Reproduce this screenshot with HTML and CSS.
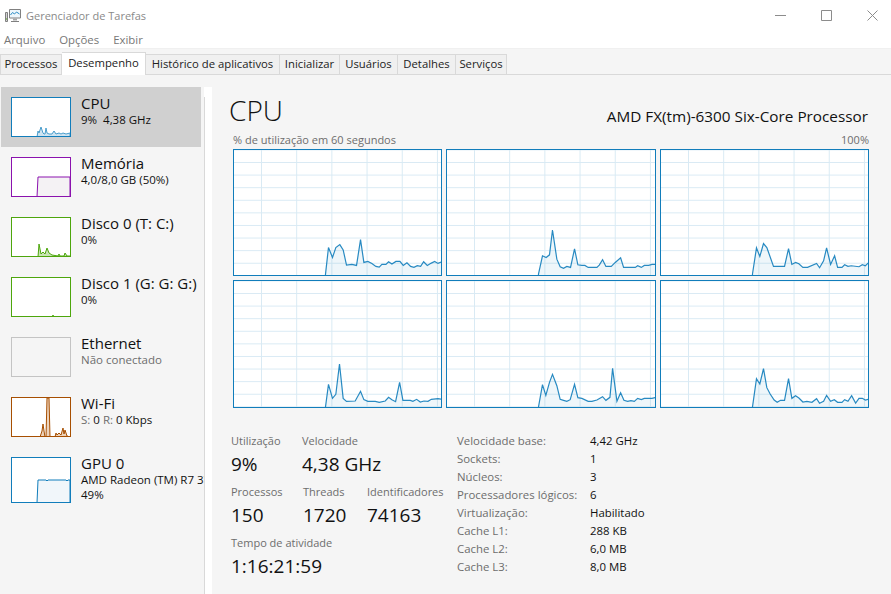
FILE: index.html
```html
<!DOCTYPE html>
<html lang="pt-BR">
<head>
    <meta charset="UTF-8">
    <meta name="viewport" content="width=device-width, initial-scale=1.0">
    <title>Gerenciador de Tarefas</title>
    <link rel="stylesheet" href="styles.css">
</head>
<body>
    <div class="titlebar">
        <svg class="app-icon" viewBox="0 0 16 16" width="16" height="16">
            <path d="M0.500 5.500h2v9h-2z" fill="#d4d4d4" stroke="#7f7f7f"/>
            <path d="M1 12h1" stroke="#4da60c"/>
            <path d="M4.500 2.500h11v8.500h-11z" fill="#eef6fb" stroke="#808080"/>
            <path d="M5.500 8l2-2.500 2 1.500 2-2 3 2" fill="none" stroke="#2a8bc4"/>
            <path d="M8 11.500h4v2h-4z" fill="#a6a6a6"/>
            <path d="M6 14.500h8" stroke="#7f7f7f"/>
        </svg>
        <span class="app-title">Gerenciador de Tarefas</span>
        <div class="window-buttons">
            <svg viewBox="0 0 11 11" width="11" height="11"><path d="M0 5.500h11" stroke="#8c8c8c"/></svg>
            <svg viewBox="0 0 11 11" width="11" height="11"><path d="M0.500 0.500h10v10h-10z" fill="none" stroke="#8c8c8c"/></svg>
            <svg viewBox="0 0 11 11" width="11" height="11"><path d="M0.500 0.500l10 10M10.500 0.500l-10 10" stroke="#8c8c8c"/></svg>
        </div>
    </div>
    <div class="menubar">
        <span>Arquivo</span>
        <span>Opções</span>
        <span>Exibir</span>
    </div>
    <div class="tabs">
        <div class="tab tab-processos">Processos</div>
        <div class="tab tab-active">Desempenho</div>
        <div class="tab tab-historico">Histórico de aplicativos</div>
        <div class="tab tab-inicializar">Inicializar</div>
        <div class="tab tab-usuarios">Usuários</div>
        <div class="tab tab-detalhes">Detalhes</div>
        <div class="tab tab-servicos">Serviços</div>
    </div>
    <div class="main">
        <div class="sidebar">
            <div class="item item-selected">
                <div class="thumb thumb-blue">
                    <svg viewBox="0 0 58 38" preserveAspectRatio="none"><polyline class="fill-blue fill-cpu" points="25,39 26,33 27,35 29,29 31,35 32,36 33,36 34,30 35,35 37,36 40,36 42,33 44,36 47,35 49,36 51,35 54,36 58,35 58,39"/></svg>
                </div>
                <div class="item-text">
                    <div class="item-name">CPU</div>
                    <div class="item-sub">9%&nbsp; 4,38 GHz</div>
                </div>
            </div>
            <div class="item">
                <div class="thumb thumb-purple">
                    <svg viewBox="0 0 58 38" preserveAspectRatio="none"><polyline class="fill-purple" points="25,39 26,19 58,19 58,39"/></svg>
                </div>
                <div class="item-text">
                    <div class="item-name">Memória</div>
                    <div class="item-sub">4,0/8,0 GB (50%)</div>
                </div>
            </div>
            <div class="item">
                <div class="thumb thumb-green">
                    <svg viewBox="0 0 58 38" preserveAspectRatio="none"><polyline class="fill-green" points="26,39 27,26 29,36 31,34 33,36 35,30 37,35 40,37 46,38 47,36 48,38 52,38 53,35 55,38 58,38 58,39"/></svg>
                </div>
                <div class="item-text">
                    <div class="item-name">Disco 0 (T: C:)</div>
                    <div class="item-sub">0%</div>
                </div>
            </div>
            <div class="item">
                <div class="thumb thumb-green">
                    <svg viewBox="0 0 58 38" preserveAspectRatio="none"><polyline class="fill-green" points="40,39 41,37 42,39"/></svg>
                </div>
                <div class="item-text">
                    <div class="item-name">Disco 1 (G: G: G:)</div>
                    <div class="item-sub">0%</div>
                </div>
            </div>
            <div class="item">
                <div class="thumb thumb-gray"></div>
                <div class="item-text">
                    <div class="item-name">Ethernet</div>
                    <div class="item-sub sub-muted">Não conectado</div>
                </div>
            </div>
            <div class="item">
                <div class="thumb thumb-orange">
                    <svg viewBox="0 0 58 38" preserveAspectRatio="none"><polyline class="fill-orange" points="28,39 30,33 31,26 32,33 33,39 34,39 35,0 37,0 38,39 43,39 44,35 45,37 47,35 49,37 51,30 52,36 53,32 55,38 58,39"/></svg>
                </div>
                <div class="item-text">
                    <div class="item-name">Wi-Fi</div>
                    <div class="item-sub"><span class="sub-muted">S:</span> 0 <span class="sub-muted">R:</span> 0 Kbps</div>
                </div>
            </div>
            <div class="item">
                <div class="thumb thumb-blue thumb-tall">
                    <svg viewBox="0 0 58 44" preserveAspectRatio="none"><polyline class="fill-blue" points="25,45 26,22 34,22 35,23 36,22 54,22 55,23 56,22 58,22 58,45"/></svg>
                </div>
                <div class="item-text">
                    <div class="item-name">GPU 0</div>
                    <div class="item-sub">AMD Radeon (TM) R7 370 Series</div>
                    <div class="item-sub">49%</div>
                </div>
            </div>
        </div>
        <div class="splitter"><div class="splitter-line"></div></div>
        <div class="content">
            <div class="content-head">
                <div class="content-title">CPU</div>
                <div class="content-model">AMD FX(tm)-6300 Six-Core Processor</div>
            </div>
            <div class="chart-caption">
                <span>% de utilização em 60 segundos</span>
                <span>100%</span>
            </div>
            <div class="charts">
                <div class="chart">
                    <svg viewBox="0 0 621 378" preserveAspectRatio="none"><polyline points="274,382 274,376 283,295 295,325 305,295 317,286 327,302 337,348 353,346 367,349 379,271 389,340 401,337 413,343 425,352 435,354 443,346 455,346 463,338 473,345 485,337 497,337 507,349 518,341 529,352 539,355 549,350 559,352 568,338 579,349 591,342 601,337 611,343 623,338 623,382"/></svg>
                </div>
                <div class="chart">
                    <svg viewBox="0 0 621 378" preserveAspectRatio="none"><polyline points="274,382 274,375 286,320 297,325 307,317 316,242 329,330 339,353 349,358 359,352 370,355 382,299 392,347 404,349 413,349 423,355 434,355 449,355 456,348 466,332 476,352 492,352 504,340 520,326 529,355 564,355 571,350 582,355 591,349 604,349 614,346 625,346 625,382"/></svg>
                </div>
                <div class="chart">
                    <svg viewBox="0 0 621 378" preserveAspectRatio="none"><polyline points="274,382 274,375 286,296 296,322 307,283 317,295 337,352 370,352 382,298 392,346 403,340 413,344 425,355 439,355 466,343 475,356 487,335 496,296 508,346 520,320 529,355 542,355 550,347 560,352 570,350 593,353 603,347 612,350 624,339 624,382"/></svg>
                </div>
                <div class="chart">
                    <svg viewBox="0 0 621 378" preserveAspectRatio="none"><polyline points="274,382 274,378 283,310 295,352 305,340 316,249 327,352 337,361 363,360 379,331 389,356 401,361 423,361 435,364 453,360 463,349 473,356 484,362 496,304 506,358 528,358 536,361 547,355 558,363 569,360 581,361 591,355 611,353 623,355 623,382"/></svg>
                </div>
                <div class="chart">
                    <svg viewBox="0 0 621 378" preserveAspectRatio="none"><polyline points="274,382 274,378 286,311 296,343 307,304 316,280 329,314 339,355 349,358 359,361 369,356 382,310 392,350 404,352 423,361 434,361 449,357 466,347 476,358 488,349 496,262 509,361 520,335 530,358 541,361 551,359 561,361 571,352 582,356 591,352 614,352 625,349 625,382"/></svg>
                </div>
                <div class="chart">
                    <svg viewBox="0 0 621 378" preserveAspectRatio="none"><polyline points="274,382 274,378 286,293 296,309 307,263 317,320 327,339 339,357 348,364 358,358 370,358 382,293 392,352 403,344 413,351 425,363 437,361 452,364 466,353 475,367 487,361 496,343 508,361 519,356 529,364 542,364 550,356 560,361 571,344 583,366 593,352 603,352 612,357 624,354 624,382"/></svg>
                </div>
            </div>
            <div class="stats">
                <div class="stats-left">
                    <div class="stat-row">
                        <div class="stat stat-util"><div class="stat-label">Utilização</div><div class="stat-value">9%</div></div>
                        <div class="stat"><div class="stat-label">Velocidade</div><div class="stat-value">4,38 GHz</div></div>
                    </div>
                    <div class="stat-row">
                        <div class="stat stat-proc"><div class="stat-label">Processos</div><div class="stat-value">150</div></div>
                        <div class="stat stat-threads"><div class="stat-label">Threads</div><div class="stat-value">1720</div></div>
                        <div class="stat"><div class="stat-label">Identificadores</div><div class="stat-value">74163</div></div>
                    </div>
                    <div class="stat-row">
                        <div class="stat"><div class="stat-label">Tempo de atividade</div><div class="stat-value">1:16:21:59</div></div>
                    </div>
                </div>
                <div class="specs">
                    <span class="spec-label">Velocidade base:</span><span>4,42 GHz</span>
                    <span class="spec-label">Sockets:</span><span>1</span>
                    <span class="spec-label">Núcleos:</span><span>3</span>
                    <span class="spec-label">Processadores lógicos:</span><span>6</span>
                    <span class="spec-label">Virtualização:</span><span>Habilitado</span>
                    <span class="spec-label">Cache L1:</span><span>288 KB</span>
                    <span class="spec-label">Cache L2:</span><span>6,0 MB</span>
                    <span class="spec-label">Cache L3:</span><span>8,0 MB</span>
                </div>
            </div>
        </div>
    </div>
</body>
</html>
```

FILE: styles.css
```css
html, body {
    height: 100%;
}
body {
    font-family: "Open Sans", "Noto Sans", sans-serif;
    font-size: 11px;
    background-color: #f5f5f5;
    color: #111;
    margin: 0;
    padding: 0;
    display: flex;
    flex-direction: column;
    overflow: hidden;
}
.titlebar {
    height: 30px;
    background-color: #fff;
    display: flex;
    align-items: center;
    padding-left: 5px;
}
.app-icon {
    margin-right: 5px;
}
.app-title {
    color: #8a8a8a;
}
.window-buttons {
    margin-left: auto;
    margin-right: 13px;
    display: flex;
    gap: 35px;
}
.menubar {
    height: 18px;
    background-color: #fff;
    display: flex;
    gap: 14px;
    padding-left: 4px;
    color: #777;
    font-size: 11.4px;
    line-height: 20px;
}
.tabs {
    height: 27px;
    box-sizing: border-box;
    padding-top: 5px;
    display: flex;
    border-top: 1px solid #f0f0f0;
    border-bottom: 1px solid #d9d9d9;
    font-size: 11.3px;
}
.tab {
    height: 20px;
    line-height: 17px;
    box-sizing: border-box;
    text-align: center;
    border: 1px solid #d9d9d9;
    border-bottom: none;
    border-left: none;
    background-color: #f0f0f0;
    color: #222;
    white-space: nowrap;
}
.tab-processos {
    width: 62px;
    border-left: 1px solid #d9d9d9;
}
.tab-active {
    width: 84px;
    height: 23px;
    margin-top: -2px;
    background-color: #fff;
    line-height: 20px;
}
.tab-historico {
    width: 134px;
}
.tab-inicializar {
    width: 60px;
}
.tab-usuarios {
    width: 58px;
}
.tab-detalhes {
    width: 58px;
}
.tab-servicos {
    width: 51px;
}
.main {
    flex: 1;
    display: flex;
    min-height: 0;
}
.sidebar {
    width: 204px;
    flex: none;
    padding-top: 12px;
    box-sizing: border-box;
    overflow: hidden;
}
.item {
    width: 200px;
    height: 60px;
    margin-left: 1px;
    box-sizing: border-box;
    padding: 10px 0 0 10px;
    display: flex;
    white-space: nowrap;
}
.item-selected {
    background-color: #d0d0d0;
}
.thumb {
    width: 60px;
    height: 40px;
    box-sizing: border-box;
    border: 1px solid;
    background-color: #fff;
    flex: none;
    overflow: hidden;
}
.thumb svg {
    display: block;
    width: 100%;
    height: 100%;
}
.thumb polyline {
    stroke-width: 1;
    vector-effect: non-scaling-stroke;
}
.thumb-tall {
    height: 46px;
}
.thumb-blue {
    border-color: #117dbb;
}
.thumb-purple {
    border-color: #8b12ae;
}
.thumb-green {
    border-color: #4da60c;
}
.thumb-gray {
    border-color: #c4c4c4;
    background-color: #f5f5f5;
}
.thumb-orange {
    border-color: #a74f01;
}
.fill-blue {
    stroke: #117dbb;
    fill: #f1f6fa;
}
.fill-cpu {
    stroke: #4a9dcc;
    fill: #cfe4f1;
}
.fill-purple {
    stroke: #8b12ae;
    fill: #f4f2f4;
}
.fill-green {
    stroke: #4da60c;
    fill: #c8e3b4;
}
.fill-orange {
    stroke: #a74f01;
    fill: #edd3bb;
}
.item-text {
    margin-left: 10px;
    margin-top: -3px;
}
.item-name {
    font-size: 15px;
    line-height: 18px;
    margin-bottom: 1px;
}
.item-sub {
    font-size: 11.5px;
    line-height: 14.5px;
}
.sub-muted {
    color: #6d6d6d;
}
.splitter {
    width: 8px;
    flex: none;
    margin-top: 12px;
    background-color: #fff;
}
.splitter-line {
    width: 1px;
    height: 100%;
    margin-top: 10px;
    background-color: #d9d9d9;
}
.content {
    flex: 1;
    min-width: 0;
    padding: 0 22px 0 21px;
}
.content-head {
    display: flex;
    justify-content: space-between;
    align-items: flex-end;
    height: 40px;
    margin-left: -4px;
    margin-top: 15px;
}
.content-title {
    font-size: 28px;
    font-weight: 300;
    line-height: 40px;
}
.content-model {
    font-size: 15.3px;
    line-height: 20px;
    margin-bottom: 4px;
    margin-right: 1px;
}
.chart-caption {
    display: flex;
    justify-content: space-between;
    color: #6d6d6d;
    line-height: 14px;
    height: 16px;
    margin-top: 3px;
}
.charts {
    display: grid;
    grid-template-columns: repeat(3, 1fr);
    grid-template-rows: 127px 128px;
    gap: 4px;
}
.chart {
    border: 1px solid #117dbb;
    overflow: hidden;
    background-color: #fff;
    background-image:
        linear-gradient(#d9eaf4 1px, transparent 1px),
        linear-gradient(90deg, #d9eaf4 1px, transparent 1px);
    background-size: 100% 12.6px, 35.2px 100%;
    background-position: 0 12px, 27px 0;
}
.chart svg {
    display: block;
    width: 100%;
    height: 100%;
}
.chart polyline {
    stroke: #117dbb;
    stroke-width: 1.2;
    stroke-opacity: 0.9;
    fill: rgba(17, 125, 187, 0.07);
    vector-effect: non-scaling-stroke;
}
.stats {
    display: flex;
    margin-top: 25px;
}
.stats-left {
    width: 226px;
    margin-left: -2px;
    flex: none;
}
.stat-row {
    display: flex;
    height: 51px;
}
.stat {
    white-space: nowrap;
}
.stat-util {
    width: 71px;
}
.stat-proc {
    width: 72px;
}
.stat-threads {
    width: 64px;
}
.stat-label {
    color: #6d6d6d;
    line-height: 15px;
}
.stat-value {
    font-size: 19px;
    line-height: 32px;
}
.specs {
    display: grid;
    grid-template-columns: 133px auto;
    grid-auto-rows: 18px;
    font-size: 11.4px;
    line-height: 15px;
    align-content: start;
}
.spec-label {
    color: #6d6d6d;
}
```
